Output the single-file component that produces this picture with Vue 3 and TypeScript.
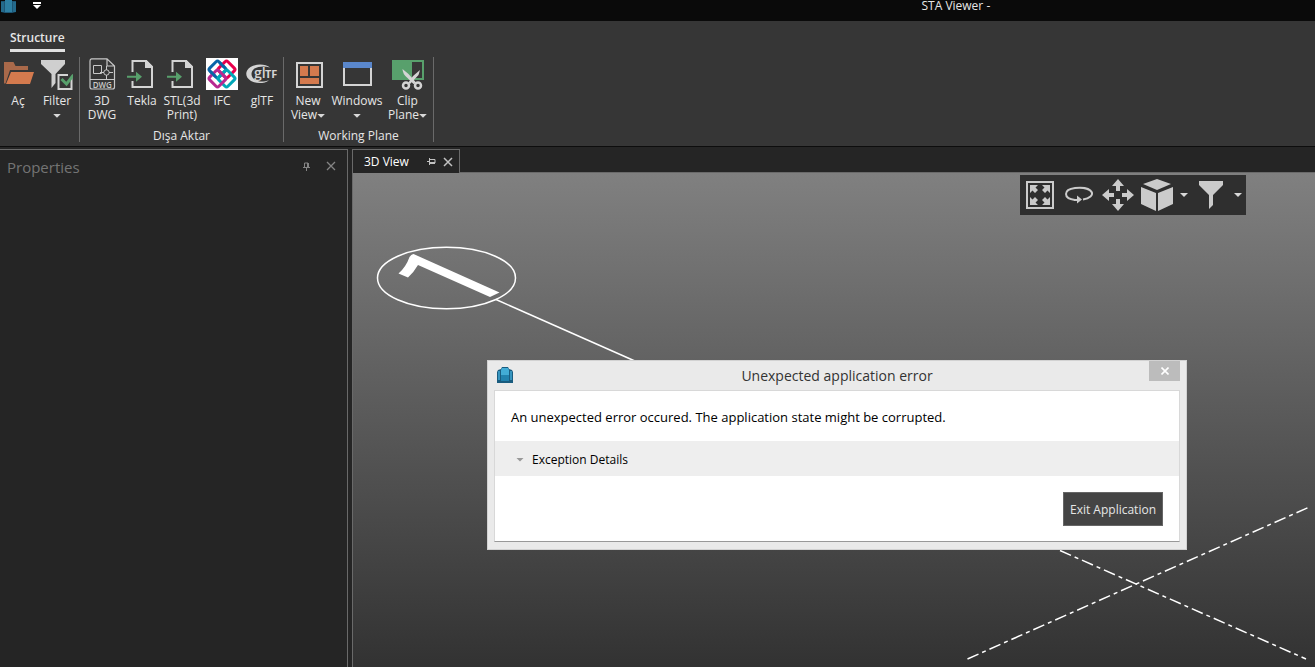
<script setup lang="ts">
import { ref } from 'vue'

interface Tool {
  id: string
  lines: string[]
  caret?: 'inline' | 'below'
}
interface Group {
  id: string
  title: string
  tools: Tool[]
}

const groups: Group[] = [
  {
    id: 'file',
    title: '',
    tools: [
      { id: 'open', lines: ['Aç'] },
      { id: 'filter', lines: ['Filter'], caret: 'below' },
    ],
  },
  {
    id: 'export',
    title: 'Dışa Aktar',
    tools: [
      { id: 'dwg', lines: ['3D', 'DWG'] },
      { id: 'tekla', lines: ['Tekla'] },
      { id: 'stl', lines: ['STL(3d', 'Print)'] },
      { id: 'ifc', lines: ['IFC'] },
      { id: 'gltf', lines: ['glTF'] },
    ],
  },
  {
    id: 'plane',
    title: 'Working Plane',
    tools: [
      { id: 'newview', lines: ['New', 'View'], caret: 'inline' },
      { id: 'windows', lines: ['Windows'], caret: 'below' },
      { id: 'clip', lines: ['Clip', 'Plane'], caret: 'inline' },
    ],
  },
]

const expanded = ref(false)
</script>

<template>
  <div class="app">
    <header class="titlebar">
      <div class="quick">
        <svg class="logo" width="17" height="14" viewBox="0 0 17 14" aria-hidden="true">
          <path d="M1 1h15v11l-4 1H5l-4-1z" fill="#1d5675" />
          <path d="M1 2h3v10H1zM13 2h3v10h-3z" fill="#246a8c" />
          <path d="M5 0h7v12H5z" fill="#2d7fa3" />
        </svg>
        <button class="plain" type="button" aria-label="Customize toolbar">
          <svg width="10" height="8" viewBox="0 0 10 8"><path d="M1 0h8v2H1zM1 3h8L5 7z" fill="#fff" /></svg>
        </button>
      </div>
      <span class="app-title">STA Viewer -</span>
    </header>

    <section class="ribbon">
      <nav class="tabs"><button class="tab" type="button">Structure</button></nav>
      <div class="groups">
        <div v-for="g in groups" :key="g.id" class="group" :class="g.id">
          <div class="tools">
            <button v-for="t in g.tools" :key="t.id" class="tool" :class="t.id" type="button">
              <svg class="icon" width="32" height="32" viewBox="0 0 32 32" aria-hidden="true">
                <g v-if="t.id === 'open'">
                  <path d="M2 4h9.500l2 4H26v4H8L3.500 25.500H2z" fill="#a9694a" />
                  <path d="M9 14h23l-4 12H4z" fill="#d47a4e" />
                </g>
                <g v-else-if="t.id === 'filter'">
                  <path d="M0 2h24v4L14.500 16v9L10.500 30V16L0 6z" fill="#cfcfcf" />
                  <path d="M16 15h16v17H16z" fill="#363636" />
                  <path d="M30.500 20V31H17.500V17H27" fill="none" stroke="#d4d4d4" stroke-width="2" />
                  <path d="M20.500 21l5 5 7-9" fill="none" stroke="#58a06c" stroke-width="3" />
                </g>
                <g v-else-if="t.id === 'dwg'" fill="none" stroke="#c8c8c8">
                  <path d="M5.500 .8H21L28.500 8v21q0 2-2 2H6q-2 0-2-2V3q0-2 1.500-2.200zM21 1v7h7M4 21.500h24.500" stroke-width="1.200" />
                  <path d="M7.500 7.500h8v8h-8z" />
                  <circle cx="20.500" cy="14.500" r="2.700" />
                  <path d="M14 14.500h4M23 14.500h4M20.500 8v4M20.500 17v4" />
                  <text x="16.300" y="29.500" text-anchor="middle" class="dwg-text">DWG</text>
                </g>
                <g v-else-if="t.id === 'tekla' || t.id === 'stl'">
                  <path d="M6.500 14V3H20l6 6v20H6.500v-6" fill="none" stroke="#d4d4d4" stroke-width="2" />
                  <path d="M19 2h1.500L27 8.500V10h-8z" fill="#d4d4d4" />
                  <path d="M1 17.800h9v-4l6 5-6 5v-4H1z" fill="#58a06c" />
                </g>
                <g v-else-if="t.id === 'ifc'" fill="none" stroke-width="3">
                  <path d="M0 0h32v32H0z" fill="#fff" stroke="none" />
                  <rect x="5" y="5" width="13" height="13" rx="2" transform="rotate(45 11.500 11.500)" stroke="#0a64a8" />
                  <rect x="14" y="5" width="13" height="13" rx="2" transform="rotate(45 20.500 11.500)" stroke="#e8004c" />
                  <rect x="14" y="14" width="13" height="13" rx="2" transform="rotate(45 20.500 20.500)" stroke="#00a7b7" />
                  <rect x="5" y="14" width="13" height="13" rx="2" transform="rotate(45 11.500 20.500)" stroke="#b72991" />
                  <path d="M4.500 13.500l5 5" stroke="#0a64a8" />
                  <path d="M13.500 4.500l5 5" stroke="#0a64a8" />
                </g>
                <g v-else-if="t.id === 'gltf'">
                  <path d="M24 9.500C20 6 10 5.500 4.500 9c-6 4-5.500 10.500.5 14 5 3 14 2.700 18-.8-5 2-11 2-14.500-.7-4-3-4-8 0-11 4-2.500 10.500-2.700 15.500-1z" fill="#d4d4d4" />
                  <text x="8" y="20" class="gltf-big">gl</text>
                  <text x="19" y="20" class="gltf-small">TF</text>
                </g>
                <g v-else-if="t.id === 'newview'">
                  <path d="M5 5h25v24H5z" fill="none" stroke="#d4d4d4" stroke-width="2" />
                  <path d="M8 8h8v10H8zM18 8h9v10h-9zM8 20h19v6H8z" fill="#d47a4e" />
                </g>
                <g v-else-if="t.id === 'windows'">
                  <path d="M3 6v21h27V6" fill="none" stroke="#d4d4d4" stroke-width="2" />
                  <path d="M2 4h29v6H2z" fill="#5a87cc" />
                </g>
                <g v-else>
                  <path d="M0 2h32v20H0z" fill="#58a06c" />
                  <path d="M20 4h10v16H20z" fill="#363636" />
                  <path d="M10 22h21v10H10z" fill="#363636" />
                  <path d="M10.500 11l6 5 8 9-3 1-6-6q-5-4-5-9zM28 12l-1.500 5L18 26l-2-1 5-7z" fill="#d4d4d4" />
                  <g fill="none" stroke="#d4d4d4" stroke-width="2.500">
                    <circle cx="14" cy="27.500" r="3" /><circle cx="26" cy="27.500" r="3" />
                  </g>
                </g>
              </svg>
              <span class="label">
                <span v-for="(l, i) in t.lines" :key="l" class="line">{{ l
                  }}<i v-if="t.caret === 'inline' && i === t.lines.length - 1" class="caret" /></span>
                <span v-if="t.caret === 'below'" class="line"><i class="caret" /></span>
              </span>
            </button>
          </div>
          <div class="group-title">{{ g.title }}</div>
        </div>
      </div>
    </section>

    <main class="dock">
      <aside class="properties">
        <h2>Properties</h2>
        <button class="plain pin" type="button" aria-label="Auto hide">
          <svg width="9" height="9" viewBox="0 0 9 9"><path d="M2.500 5V1H6v4M1 5.500h7M4.500 6v3" fill="none" stroke="#858585" /><path d="M5 1h2v4H5z" fill="#858585" /></svg>
        </button>
        <button class="plain" type="button" aria-label="Close Properties">
          <svg width="10" height="10" viewBox="0 0 10 10"><path d="M1 1l8 8M9 1L1 9" stroke="#858585" stroke-width="1.300" /></svg>
        </button>
      </aside>

      <section class="document">
        <div class="doc-tabs">
          <div class="doc-tab">
            <span>3D View</span>
            <button class="plain pin" type="button" aria-label="Pin tab">
              <svg width="9" height="9" viewBox="0 0 9 9"><path d="M3 2.500h5V6M2.500 1v7M3 4.500H0" fill="none" stroke="#c2c2c2" /><path d="M3 5h5v2H3z" fill="#c2c2c2" /></svg>
            </button>
            <button class="plain" type="button" aria-label="Close tab">
              <svg width="10" height="10" viewBox="0 0 10 10"><path d="M1 1l8 8M9 1L1 9" stroke="#c2c2c2" stroke-width="1.500" /></svg>
            </button>
          </div>
        </div>

        <div class="viewport">
          <svg class="scene" width="962" height="494" viewBox="353 173 962 494" aria-hidden="true">
            <g fill="none" stroke="#fff" stroke-width="1.500">
              <ellipse cx="446.500" cy="278" rx="69" ry="30.800" />
              <path d="M496 299.500L636 361.500" />
              <path d="M1060 550.500L1306 659" stroke-dasharray="12 4 4 4" />
              <path d="M967.500 659L1309.500 507" stroke-dasharray="12 4 4 4" />
            </g>
            <path d="M413.500 254L499.500 292.500L490 297L418 265Q414 272 408 277.500L398.500 273.500Q406 267 409.500 257Q411 254.500 413.500 254z" fill="#fff" />
          </svg>

          <div class="view-tools">
            <button class="plain" type="button" aria-label="Zoom to fit">
              <svg width="28" height="28" viewBox="0 0 28 28">
                <path d="M1 1h26v26H1z" fill="none" stroke="#cbcbcb" stroke-width="2" />
                <path d="M4 4h8L9.500 6.500 12 9 9 12 6.500 9.500 4 12zM24 4v8L21.500 9.500 19 12l-3-3 2.500-2.500L16 4zM4 24v-8l2.500 2.500L9 16l3 3-2.500 2.500L12 24zM24 24h-8l2.500-2.500L16 19l3-3 2.500 2.500L24 16z" fill="#cbcbcb" />
              </svg>
            </button>
            <button class="plain orbit" type="button" aria-label="Orbit">
              <svg width="28" height="18" viewBox="0 0 28 18">
                <path d="M10 14C-2 12.500-2 3.500 10 2c20-2 22 9.500 8 11.500" fill="none" stroke="#cbcbcb" stroke-width="2" />
                <path d="M9 13h3V9.500l5 4-5 4V15H9z" fill="#cbcbcb" />
              </svg>
            </button>
            <button class="plain" type="button" aria-label="Pan">
              <svg width="32" height="32" viewBox="0 0 32 32">
                <path d="M16 0l6 7h-4v5h-4V7h-4zM16 32l6-7h-4v-5h-4v5h-4zM0 16l7-6v4h5v4H7v4zM32 16l-7-6v4h-5v4h5v4z" fill="#cbcbcb" />
              </svg>
            </button>
            <button class="plain cube" type="button" aria-label="View orientation">
              <svg width="32" height="32" viewBox="0 0 32 32">
                <path d="M16 0l14 5-14 6L2 5zM0 8l15 6v18L0 25zM32 8v17l-15 7V14z" fill="#cbcbcb" />
              </svg>
            </button>
            <button class="plain" type="button" aria-label="View orientation options"><i class="caret" /></button>
            <button class="plain funnel" type="button" aria-label="Filter view">
              <svg width="24" height="28" viewBox="0 0 24 28"><path d="M0 0h24v4l-10 10v10l-4 4V14L0 4z" fill="#cbcbcb" /></svg>
            </button>
            <button class="plain" type="button" aria-label="Filter view options"><i class="caret" /></button>
          </div>

          <div class="dialog" role="alertdialog" aria-labelledby="dialog-title" aria-describedby="dialog-message">
            <div class="dialog-head">
              <svg width="16" height="16" viewBox="0 0 16 16" aria-hidden="true">
                <path d="M5 0h6l1 2 3 1 1 2v11H0V5l1-2 3-1z" fill="#1a5c7f" />
                <path d="M1 4h2v9H1zM13 4h2v9h-2z" fill="#3795bf" />
                <path d="M5 1h6l1 2v6H4V3z" fill="#42acd6" />
                <path d="M4 8h8v6H4z" fill="#2182ae" />
              </svg>
              <h1 id="dialog-title">Unexpected application error</h1>
              <button class="dialog-close" type="button" aria-label="Close">
                <svg width="8" height="8" viewBox="0 0 8 8"><path d="M.5 .5l7 7M7.500 .5l-7 7" stroke="#fff" stroke-width="1.600" /></svg>
              </button>
            </div>
            <div class="dialog-body">
              <p id="dialog-message">An unexpected error occured. The application state might be corrupted.</p>
              <button class="details" type="button" :aria-expanded="expanded" @click="expanded = !expanded">
                <i class="caret" />Exception Details
              </button>
              <div class="actions"><button class="exit" type="button">Exit Application</button></div>
            </div>
          </div>
        </div>
      </section>
    </main>
  </div>
</template>

<style>
body {
  margin: 0;
  background: #252525;
}
</style>

<style scoped>
* {
  box-sizing: border-box;
}
.app {
  display: flex;
  flex-direction: column;
  height: 100vh;
  overflow: hidden;
  color: #e6e6e6;
  font: 12px/14px "Open Sans", "Noto Sans", sans-serif;
}
button {
  padding: 0;
  border: 0;
  background: none;
  color: inherit;
  font: inherit;
}
svg {
  display: block;
}
.plain {
  display: flex;
  align-items: center;
  justify-content: center;
}
.caret {
  display: inline-block;
  width: 8px;
  height: 4px;
  background: #d8d8d8;
  clip-path: polygon(0 0, 100% 0, 50% 100%);
  vertical-align: middle;
}
.titlebar {
  display: flex;
  flex: none;
  height: 21px;
  background: #0a0a0a;
}
.quick {
  display: flex;
  flex: 0 0 70%;
  align-items: flex-start;
  gap: 15px;
}
.quick .plain {
  padding-top: 2px;
}
.app-title {
  padding-left: 1px;
  line-height: 12px;
}
.ribbon {
  flex: none;
  background: #363636;
  border-bottom: 1px solid #0d0d0d;
}
.tabs {
  padding: 9px 10px 5px;
}
.tab {
  height: 22px;
  padding-bottom: 3px;
  border-bottom: 3px solid #e0e0e0;
  font-weight: 600;
  line-height: 16px;
}
.groups {
  display: flex;
  height: 89px;
  padding-bottom: 4px;
}
.group {
  display: flex;
  flex-direction: column;
  justify-content: space-between;
  border-right: 1px solid #6a6a6a;
}
.tools {
  display: flex;
}
.tool {
  display: flex;
  flex-direction: column;
  align-items: center;
  width: 40px;
  padding-top: 1px;
  white-space: nowrap;
}
.file .tools {
  padding-right: 3px;
}
.file .tool {
  width: 38px;
}
.file .tool.open {
  width: 36px;
  margin-right: 2px;
}
.export .tools {
  padding: 0 1px 0 2px;
}
.plane .newview {
  width: 48px;
}
.plane .windows {
  width: 50px;
}
.plane .clip {
  width: 51px;
}
.label {
  display: flex;
  flex-direction: column;
  padding-top: 4px;
}
.line {
  display: block;
}
.group-title {
  height: 13px;
  text-align: center;
}
.dwg-text {
  fill: #c8c8c8;
  stroke: none;
  font: 600 8px "Open Sans", sans-serif;
}
.gltf-big {
  fill: #d4d4d4;
  font: 600 14px "Open Sans", sans-serif;
}
.gltf-small {
  fill: #d4d4d4;
  font: 700 11px "Open Sans", sans-serif;
}
.dock {
  display: flex;
  flex: 1;
  gap: 4px;
  min-height: 0;
  padding-top: 2px;
  background: #252525;
}
.properties {
  display: flex;
  flex: 0 0 348px;
  align-items: flex-start;
  padding: 8px 11px 0 7px;
  border: solid #6a6a6a;
  border-width: 1px 1px 0 0;
  color: #747474;
}
.properties h2 {
  flex: 1;
  margin: 0;
  font-size: 15px;
  font-weight: 400;
  line-height: 19px;
}
.properties .plain {
  height: 16px;
}
.properties .pin {
  margin-right: 15px;
}
.document {
  display: flex;
  flex: 1;
  flex-direction: column;
  min-width: 0;
}
.doc-tabs {
  display: flex;
  height: 24px;
}
.doc-tabs::after {
  flex: 1;
  border-bottom: 1px solid #6a6a6a;
  content: "";
}
.doc-tab {
  display: flex;
  align-items: center;
  width: 108px;
  padding: 0 6px 0 11px;
  border: solid #6a6a6a;
  border-width: 1px 1px 0;
  color: #fff;
}
.doc-tab span {
  flex: 1;
}
.doc-tab .pin {
  margin-right: 7px;
}
.viewport {
  position: relative;
  flex: 1;
  overflow: hidden;
  border-left: 1px solid #6a6a6a;
  background: linear-gradient(#808080, #323232);
}
.scene {
  position: absolute;
  top: 0;
  left: 0;
}
.view-tools {
  position: absolute;
  top: 2px;
  right: 69px;
  display: flex;
  align-items: center;
  gap: 7px;
  height: 40px;
  padding: 0 4px 0 6px;
  background: #2f2f2f;
}
.view-tools .orbit {
  margin: 0 2px 0 4px;
}
.view-tools .funnel {
  margin: 0 4px;
}
.dialog {
  position: absolute;
  top: 187px;
  left: 134px;
  width: 700px;
  padding: 0 6px 7px;
  border: 1px solid #d2d2d2;
  background: #eaeaea;
  color: #000;
}
.dialog-head {
  display: flex;
  align-items: flex-start;
  height: 29px;
}
.dialog-head > svg {
  margin: 6px 0 0 3px;
}
.dialog-head h1 {
  flex: 1;
  margin: 0;
  padding: 5px 0 0 12px;
  color: #333;
  font-size: 14px;
  font-weight: 400;
  line-height: 20px;
  text-align: center;
}
.dialog-close {
  display: grid;
  width: 31px;
  height: 20px;
  place-items: center;
  background: #bcbcbc;
}
.dialog-body {
  border: 1px solid #d8d8d8;
  border-bottom-color: #999;
  background: #fff;
}
.dialog-body p {
  margin: 0;
  padding: 16px 16px 14px;
  font-size: 13px;
  line-height: 20px;
}
.details {
  display: flex;
  align-items: center;
  gap: 8px;
  width: 100%;
  height: 35px;
  padding: 2px 0 0 21px;
  background: #eee;
}
.details .caret {
  background: #999;
}
.actions {
  display: flex;
  justify-content: flex-end;
  padding: 16px 16px 15px;
}
.exit {
  width: 100px;
  height: 34px;
  padding-top: 1px;
  border: 1px solid #666;
  background: #444;
  color: #e6e6e6;
}
</style>
